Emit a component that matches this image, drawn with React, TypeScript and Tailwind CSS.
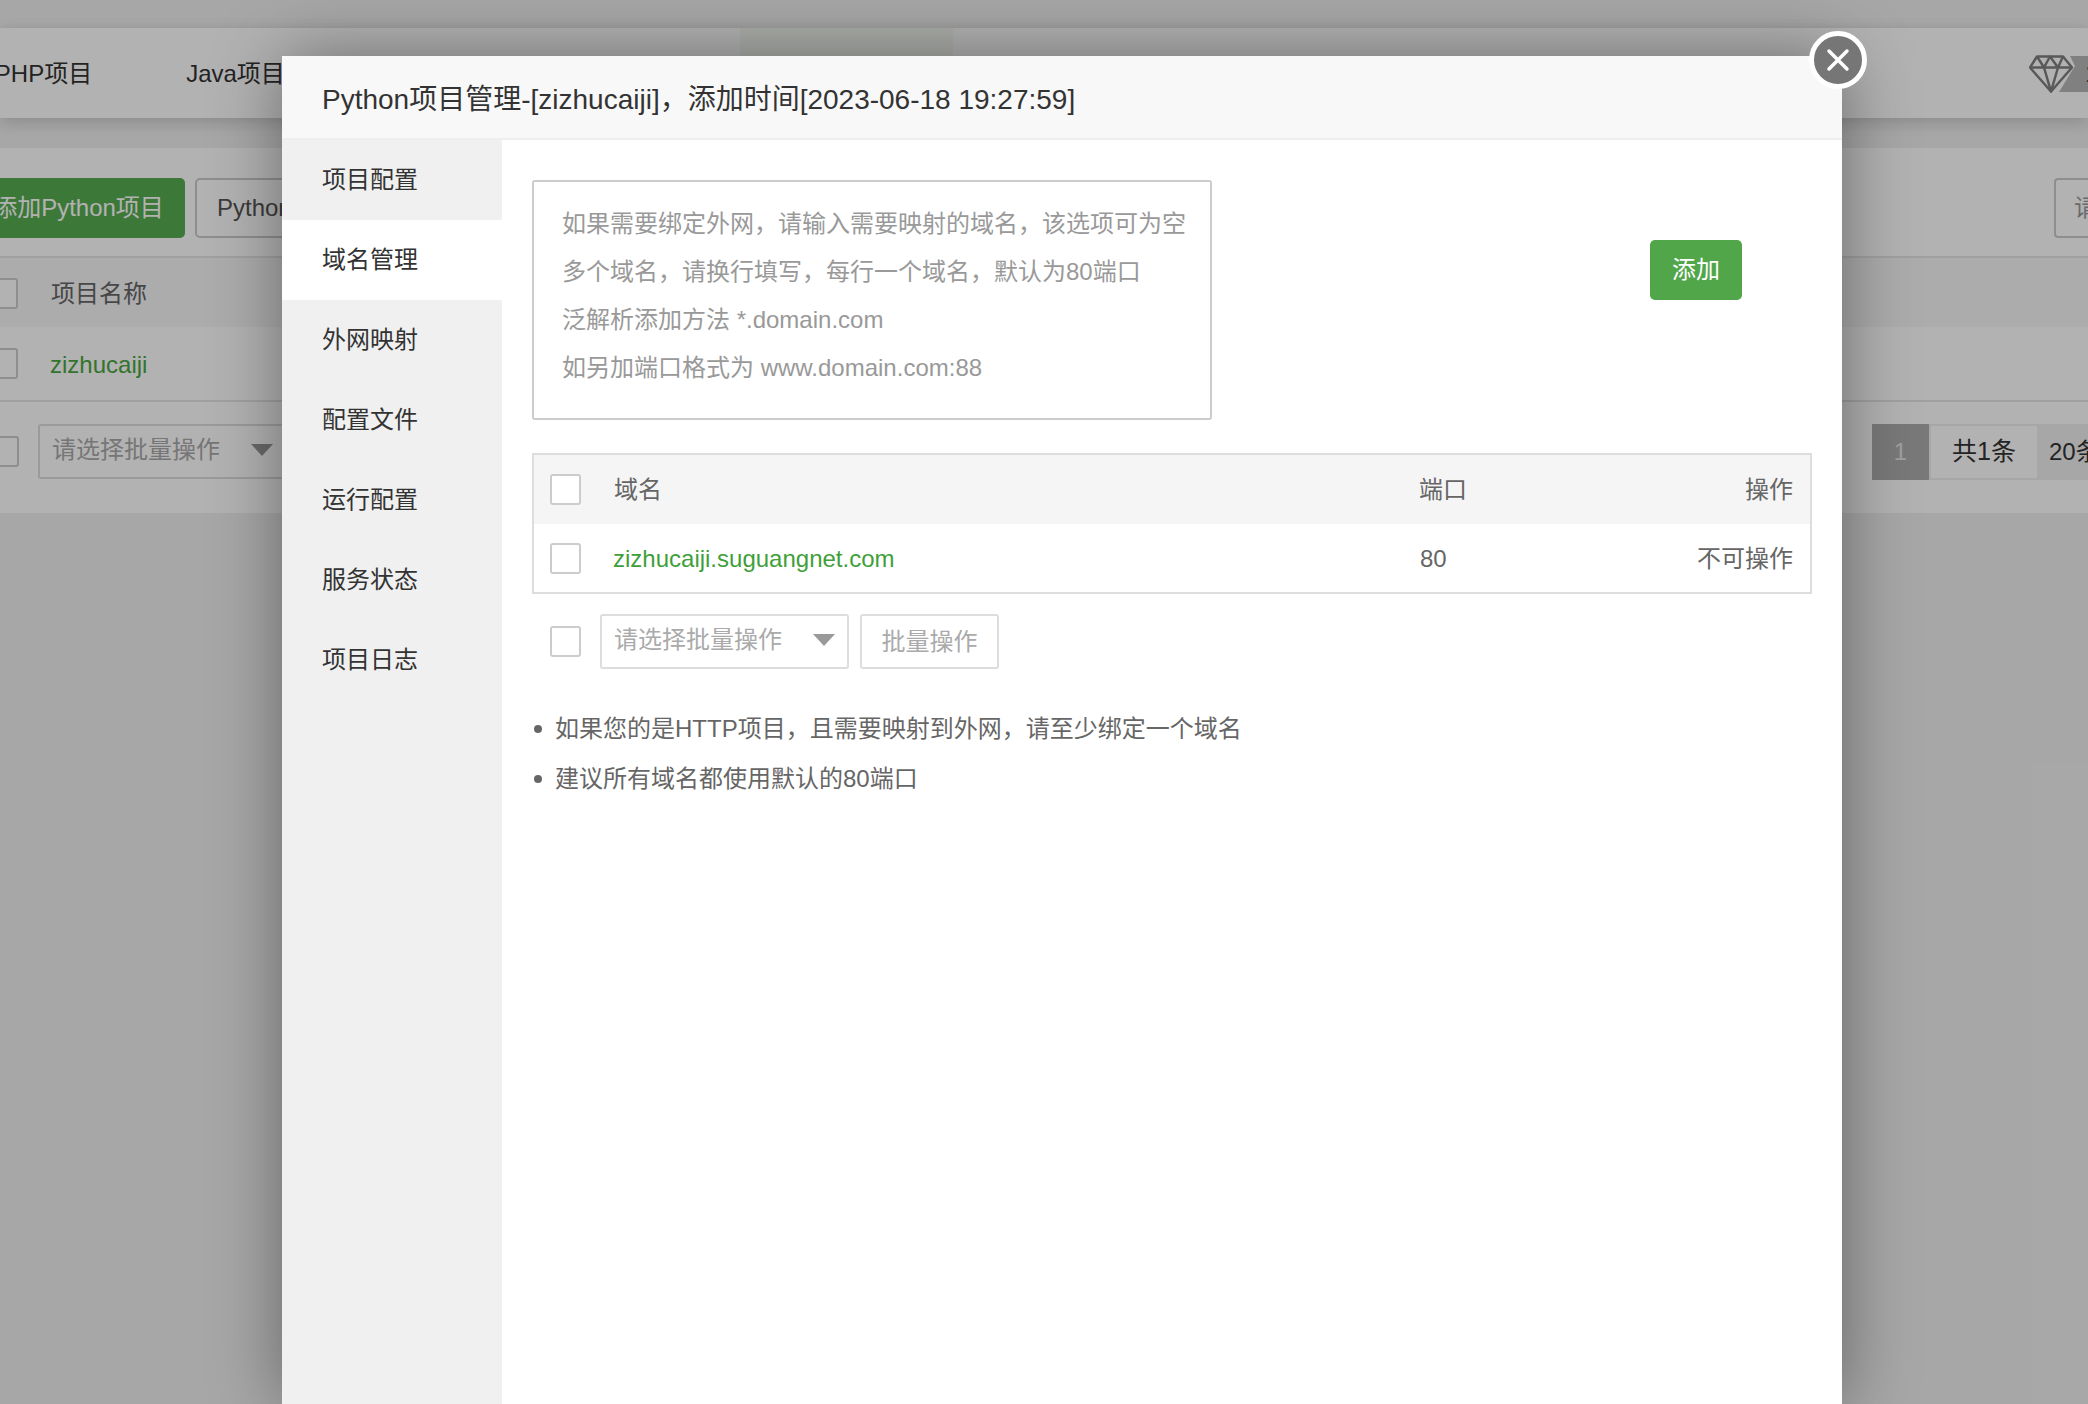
const FONT = "font-['Liberation_Sans','Noto_Sans_CJK_SC',sans-serif]";

const sideTabs = ["项目配置", "域名管理", "外网映射", "配置文件", "运行配置", "服务状态", "项目日志"];

const topTabs = [
  { label: "PHP项目", width: "w-[195px]" },
  { label: "Java项目", width: "w-[189px]" },
  { label: "Node项目", width: "w-[208px]" },
  { label: "Go项目", width: "w-[202px]" },
  { label: "Python项目", width: "w-[213px]", active: true },
];

function CheckBox({ tone = "border-[#cccccc]" }: { tone?: string }) {
  return <div className={`w-[31px] h-[31px] shrink-0 rounded-[3px] border-2 bg-white ${tone}`} />;
}

function BatchSelect({ className = "" }: { className?: string }) {
  return (
    <div className={`w-[249px] h-[55px] shrink-0 flex items-center justify-between rounded-[3px] border-2 border-[#dddddd] bg-white pl-[12px] pr-[12px] ${className}`}>
      <span className="text-[#aaaaaa] pb-[4px]">请选择批量操作</span>
      <span className="w-0 h-0 border-x-[11px] border-x-transparent border-t-[12px] border-t-[#999999] mb-[4px]" />
    </div>
  );
}

function Background() {
  return (
    <div className="h-full pt-[28px] text-[24px] text-[#333333]">
      {/* Top tabs */}
      <div className="relative h-[90px] bg-white flex items-center overflow-hidden shadow-[0_4px_16px_rgba(0,0,0,0.18)]">
        <div className="flex h-full ml-[-54px]">
          {topTabs.map((t) => (
            <div key={t.label} className={`${t.width} flex items-center justify-center h-full pt-[2px] ${t.active ? "bg-[#f6f9f4]" : ""}`}>
              {t.label}
            </div>
          ))}
        </div>
        <div className="absolute right-0 top-[27px] flex items-center">
          <svg width="44" height="38" viewBox="0 0 44 38" fill="none" stroke="#808080" strokeWidth="2.5" strokeLinejoin="round">
            <path d="M8 1.5h26l9 11-21 24L1 12.5z" />
            <path d="M1 12.5h42M8 1.5l7 11 7 24 7-24 5-11M15 12.5l6-11 8 11" />
          </svg>
          <div className="w-[29px] h-[36px] ml-[-14px] bg-[#b8b8b8] [clip-path:polygon(38%_0,100%_0,100%_100%,0_100%,55%_28%)] text-[24px] leading-[36px] pl-[26px] overflow-hidden text-[#444444]">
            1
          </div>
        </div>
      </div>

      {/* Project panel */}
      <div className="relative mt-[30px] h-[365px] bg-white overflow-hidden">
        <div className="h-[110px] flex items-center justify-between border-b-2 border-[#e5e5e5] pt-[12px]">
          <div className="flex items-center ml-[-20px] gap-[10px]">
            <div className="w-[205px] h-[60px] flex items-center justify-center rounded-[5px] bg-[#56ac50] text-white pr-[8px]">添加Python项目</div>
            <div className="w-[270px] h-[60px] flex items-center pl-[20px] rounded-[5px] border-2 border-[#cccccc] text-[#555555]">Python环境管理</div>
          </div>
          <div className="w-[34px] h-[60px] rounded-l-[4px] border-2 border-r-0 border-[#cccccc] text-[#999999] pl-[18px] leading-[56px] overflow-hidden">请输入</div>
        </div>
        <div className="h-[69px] flex items-center bg-[#f6f6f6] pt-[2px]">
          <div className="ml-[-13px]"><CheckBox /></div>
          <span className="ml-[33px] text-[#666666]">项目名称</span>
        </div>
        <div className="h-[75px] flex items-center border-b-2 border-[#e5e5e5]">
          <div className="ml-[-13px]"><CheckBox /></div>
          <span className="ml-[32px] pt-[2px] text-[#4aa63f]">zizhucaiji</span>
        </div>
        <div className="h-[111px] flex items-center justify-between pb-[12px]">
          <div className="flex items-center">
            <div className="ml-[-12px]"><CheckBox /></div>
            <BatchSelect className="ml-[19px]" />
          </div>
          {/* Pagination */}
          <div className="flex items-center h-[56px] w-[216px] bg-[#f0f0f0] overflow-hidden">
            <div className="w-[57px] h-full shrink-0 flex items-center justify-center bg-[#aeaeae] text-[#e4e4e4]">1</div>
            <div className="w-[106px] h-[52px] shrink-0 ml-[2px] flex items-center justify-center bg-white text-[#333333] text-[25px]">共1条</div>
            <div className="shrink-0 pl-[12px] whitespace-nowrap text-[#333333]">20条/页</div>
          </div>
        </div>
      </div>
    </div>
  );
}

export default function App() {
  return (
    <div className={`relative w-[2088px] h-[1404px] overflow-hidden bg-[#f0f0f0] ${FONT}`}>
      <Background />
      <div className="absolute inset-0 bg-black/30" />

      {/* Modal */}
      <div className="absolute left-[282px] top-[56px] w-[1560px] h-[1348px] bg-white flex flex-col shadow-[1px_1px_67px_rgba(0,0,0,0.4)]">
        <div className="h-[84px] shrink-0 flex items-center pl-[40px] bg-[#f8f8f8] border-b-2 border-[#eeeeee] text-[28px] text-[#333333] pt-[5px]">
          Python项目管理-[zizhucaiji]，添加时间[2023-06-18 19:27:59]
        </div>
        <div className="flex flex-1 min-h-0 text-[24px]">
          <div className="w-[220px] shrink-0 bg-[#f0f0f0]">
            {sideTabs.map((t) => (
              <div key={t} className={`h-[80px] flex items-center pl-[40px] text-[#333333] ${t === "域名管理" ? "bg-white" : ""}`}>
                {t}
              </div>
            ))}
          </div>
          <div className="flex-1 pl-[30px] pr-[30px] pt-[40px]">
            <div className="flex items-start">
              <div className="w-[680px] h-[240px] shrink-0 rounded-[3px] border-2 border-[#cccccc] pl-[28px] pt-[18px] leading-[48px] text-[#999999]">
                <div>如果需要绑定外网，请输入需要映射的域名，该选项可为空</div>
                <div>多个域名，请换行填写，每行一个域名，默认为80端口</div>
                <div>泛解析添加方法 *.domain.com</div>
                <div>如另加端口格式为 www.domain.com:88</div>
              </div>
              <div className="ml-[438px] mt-[60px] w-[92px] h-[60px] flex items-center justify-center rounded-[5px] bg-[#51a64a] text-white">添加</div>
            </div>

            <div className="mt-[33px] border-2 border-[#dddddd] text-[#666666]">
              <div className="h-[69px] flex items-center bg-[#f5f5f5] pl-[16px] pr-[17px]">
                <CheckBox />
                <span className="ml-[33px] w-[805px]">域名</span>
                <span>端口</span>
                <span className="ml-auto">操作</span>
              </div>
              <div className="h-[68px] flex items-center pl-[16px] pr-[17px]">
                <CheckBox />
                <span className="ml-[32px] w-[807px] pt-[1px] text-[#3f9f3a]">zizhucaiji.suguangnet.com</span>
                <span className="pt-[1px]">80</span>
                <span className="ml-auto pt-[1px]">不可操作</span>
              </div>
            </div>

            <div className="mt-[20px] flex items-center pl-[18px]">
              <CheckBox />
              <BatchSelect className="ml-[19px]" />
              <div className="ml-[11px] w-[139px] h-[55px] flex items-center justify-center rounded-[3px] border-2 border-[#dddddd] text-[#aaaaaa]">批量操作</div>
            </div>

            <ul className="mt-[35px] text-[#666666] leading-[50px]">
              <li className="flex items-center">
                <span className="w-[8px] h-[8px] ml-[2px] mr-[13px] rounded-full bg-[#666666]" />
                如果您的是HTTP项目，且需要映射到外网，请至少绑定一个域名
              </li>
              <li className="flex items-center">
                <span className="w-[8px] h-[8px] ml-[2px] mr-[13px] rounded-full bg-[#666666]" />
                建议所有域名都使用默认的80端口
              </li>
            </ul>
          </div>
        </div>

        {/* Close */}
        <div className="absolute right-[-25px] top-[-25px] w-[58px] h-[58px] flex items-center justify-center rounded-full border-[5px] border-white bg-[#767676]">
          <svg width="26" height="26" viewBox="0 0 26 26" fill="none" stroke="#ffffff" strokeWidth="3.5" strokeLinecap="round">
            <path d="M4 4l18 18M22 4L4 22" />
          </svg>
        </div>
      </div>
    </div>
  );
}
